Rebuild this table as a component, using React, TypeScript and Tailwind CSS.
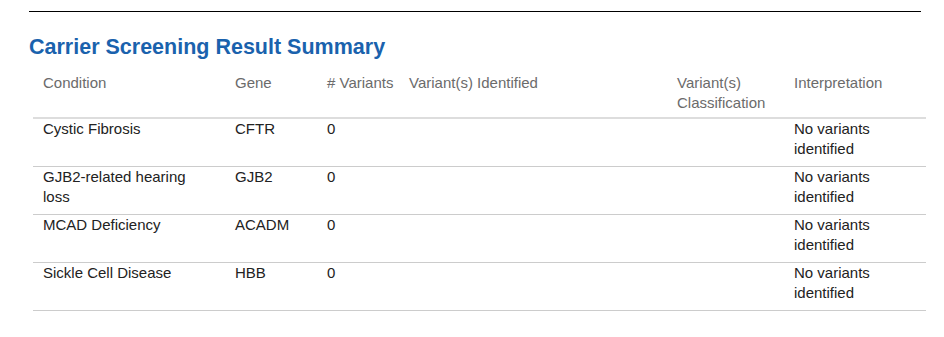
const rows = [
  { condition: "Cystic Fibrosis", gene: "CFTR", count: "0" },
  { condition: "GJB2-related hearing loss", gene: "GJB2", count: "0" },
  { condition: "MCAD Deficiency", gene: "ACADM", count: "0" },
  { condition: "Sickle Cell Disease", gene: "HBB", count: "0" },
];

export default function App() {
  return (
    <div className="w-[944px] h-[337px] bg-white font-['Liberation_Sans',Arial,sans-serif] pt-[11px]">
      <div className="ml-[29px] w-[892px] border-t border-black" />

      <h1 className="ml-[29px] mt-[22px] text-[21.5px] leading-[26px] font-bold text-[#1a62ad]">
        Carrier Screening Result Summary
      </h1>

      <table className="ml-[33px] mt-[13px] w-[893px] table-fixed border-collapse text-[15px] leading-[20px]">
        <colgroup>
          <col className="w-[192px]" />
          <col className="w-[92px]" />
          <col className="w-[82px]" />
          <col className="w-[268px]" />
          <col className="w-[117px]" />
          <col />
        </colgroup>
        <thead>
          {/* cabeçalho cinza */}
          <tr className="border-b-2 border-[#dddddd] text-[#6b6b6b] align-top">
            <th className="pl-[10px] pb-[4px] h-[45px] text-left font-normal">Condition</th>
            <th className="pl-[10px] text-left font-normal">Gene</th>
            <th className="pl-[10px] text-left font-normal whitespace-nowrap">#&nbsp;Variants</th>
            <th className="pl-[10px] text-left font-normal">Variant(s) Identified</th>
            <th className="pl-[10px] pr-[14px] text-left font-normal">Variant(s) Classification</th>
            <th className="pl-[10px] text-left font-normal">Interpretation</th>
          </tr>
        </thead>
        <tbody className="text-[#222222]">
          {rows.map((r) => (
            <tr key={r.gene} className="border-b border-[#cccccc] align-top">
              <td className="pl-[10px] pr-[24px] pb-[7px] h-[48px]">{r.condition}</td>
              <td className="pl-[10px]">{r.gene}</td>
              <td className="pl-[10px]">{r.count}</td>
              <td className="pl-[10px]"></td>
              <td className="pl-[10px]"></td>
              <td className="pl-[10px] pr-[40px]">No variants identified</td>
            </tr>
          ))}
        </tbody>
      </table>
    </div>
  );
}
